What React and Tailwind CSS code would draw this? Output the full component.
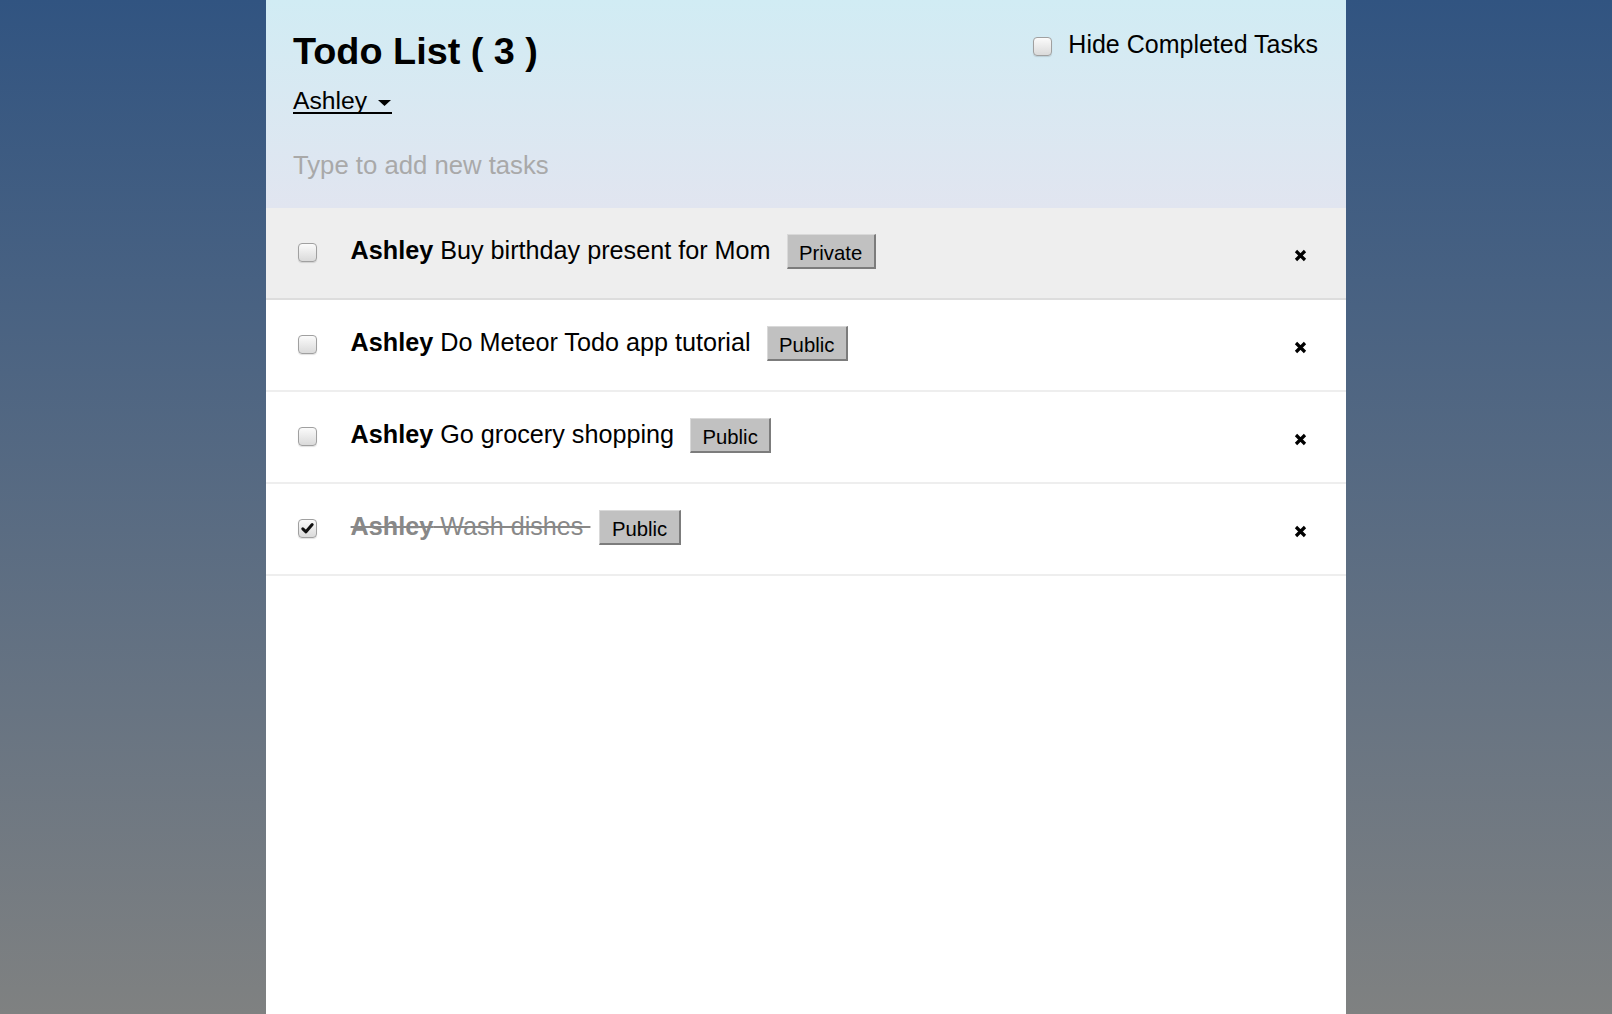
import React from "react";

function Box({ checked }) {
  return (
    <span className="relative block w-[19px] h-[19px] shrink-0 rounded-[4px] border border-[#a0a0a0] bg-linear-to-b from-[#fbfbfb] to-[#dadada] shadow-[0_1px_1px_rgba(0,0,0,0.12)]">
      {checked && (
        <svg viewBox="0 0 19 19" className="absolute left-[-1px] top-[-1px] w-[19px] h-[19px]">
          <path d="M4.8 9.8 L8 12.8 L14.2 5.6" fill="none" stroke="#111" strokeWidth="3" strokeLinecap="round" strokeLinejoin="round" />
        </svg>
      )}
    </span>
  );
}

function TagButton({ label }) {
  return (
    <button className="ml-[9px] mt-[26px] h-[35px] shrink-0 px-[11.5px] pt-[6.5px] text-[20.3px] leading-[23px] text-black bg-[#c1c1c1] border-t border-l border-t-[#d9d9d9] border-l-[#d9d9d9] border-b-2 border-r-2 border-b-[#7c7c7c] border-r-[#7c7c7c] flex items-start">
      {label}
    </button>
  );
}

function Row({ text, tag, checked, priv }) {
  return (
    <li
      className={
        "h-[92px] border-b-2 flex items-start list-none " +
        (priv ? "bg-[#eeeeee] border-[#dddddd]" : "bg-white border-[#eeeeee]")
      }
    >
      <span className="ml-[32px] mt-[35px]">
        <Box checked={checked} />
      </span>
      <span
        className={
          "ml-[33.6px] mt-[27px] text-[25.2px] leading-[30px] whitespace-pre " +
          (checked ? "text-[#888888] line-through" : "text-black")
        }
      >
        <span className="font-bold">Ashley</span>
        {" " + text + " "}
      </span>
      <TagButton label={tag} />
      <svg viewBox="0 0 13 13" className="ml-auto mr-[39px] mt-[41px] w-[13px] h-[13px] shrink-0">
        <path d="M2 2 L11 11 M11 2 L2 11" stroke="#000" strokeWidth="3.2" strokeLinecap="butt" />
      </svg>
    </li>
  );
}

export default function App() {
  return (
    <div className="min-h-[1014px] bg-linear-to-b from-[#315481] to-[#7f8181] font-['Liberation_Sans',Arial,sans-serif]">
      <div className="mx-auto w-[1080px] min-h-[1014px] bg-white">
        <header className="h-[208px] bg-linear-to-b from-[#d1ecf4] to-[#e1e5f0] pl-[27px] pr-[28px] pt-[29px] flex justify-between">
          <div className="flex flex-col items-start">
            <h1 className="text-[37.8px] font-bold leading-[44px] text-black">Todo List ( 3 )</h1>
            <div className="mt-[17px] flex items-start border-b-2 border-black pr-[1px]">
              <span className="text-[24.7px] leading-[22px] text-black">Ashley</span>
              <svg viewBox="0 0 13 6" className="ml-[11px] mt-[10px] w-[13px] h-[6px]">
                <path d="M0 0 L13 0 L6.5 6 Z" fill="#000" />
              </svg>
            </div>
            <input
              type="text"
              placeholder="Type to add new tasks"
              className="mt-[36px] w-[560px] h-[30px] text-[25.7px] leading-[30px] bg-transparent outline-none placeholder:text-[#a9a9a9]"
            />
          </div>
          <label className="flex items-start h-fit">
            <span className="mt-[8px]">
              <Box checked={false} />
            </span>
            <span className="ml-[16px] text-[25px] leading-[30px] text-black">Hide Completed Tasks</span>
          </label>
        </header>
        <ul>
          <Row text="Buy birthday present for Mom" tag="Private" priv />
          <Row text="Do Meteor Todo app tutorial" tag="Public" />
          <Row text="Go grocery shopping" tag="Public" />
          <Row text="Wash dishes" tag="Public" checked />
        </ul>
      </div>
    </div>
  );
}
